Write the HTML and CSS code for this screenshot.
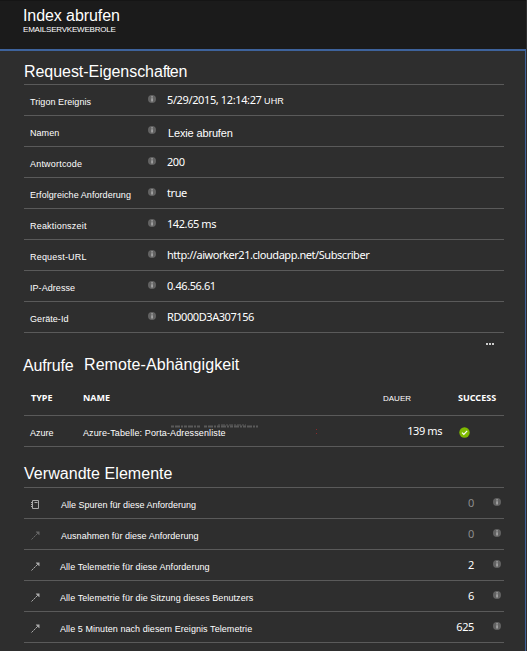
FILE: index.html
```
<!DOCTYPE html>
<html lang="de">
<head>
<meta charset="utf-8">
<title>Index abrufen</title>
<link rel="stylesheet" href="styles.css">
</head>
<body>
<svg width="0" height="0" class="defs">
  <symbol id="info" viewBox="0 0 8 8"><circle cx="4" cy="4" r="4" fill="#626262"/><path d="M3.4 1.3h1.3v1.2H3.4zM3.4 3.2h1.3v3.3H3.4z" fill="#bbb"/></symbol>
  <symbol id="arrow" viewBox="0 0 9 9"><path d="M.5 8.5L7 2" fill="none" stroke="currentColor" stroke-width="1" stroke-dasharray="2.6 .5"/><path d="M4.8 .5H8.5V4.2L7.4 3.6L5.4 1.6z" fill="currentColor"/></symbol>
  <symbol id="book" viewBox="0 0 9 9"><path d="M1.5 .5h6v8h-6zM0 2.5h2M0 4.5h2M0 6.5h2M3.5 2.5h3" fill="none" stroke="currentColor"/></symbol>
</svg>
<div class="blade">
  <header class="top">
    <h1>Index abrufen</h1>
    <p>EMAILSERVKEWEBROLE</p>
  </header>
  <main>
    <h2 class="h-props">Request-Eigenscha<span class="tight">ft</span>en</h2>
    <dl class="props">
      <div class="row"><dt>Trigon Ereignis</dt><svg class="info"><use href="#info"/></svg><dd class="date">5/29/2015, 12:14:27 <small>UHR</small></dd></div>
      <div class="row"><dt>Namen</dt><svg class="info"><use href="#info"/></svg><dd class="plain">Lexie abrufen</dd></div>
      <div class="row"><dt class="wide">Antwortcode</dt><svg class="info"><use href="#info"/></svg><dd>200</dd></div>
      <div class="row"><dt>Erfolgreiche Anforderung</dt><svg class="info"><use href="#info"/></svg><dd>true</dd></div>
      <div class="row"><dt class="wide">Reaktionszeit</dt><svg class="info"><use href="#info"/></svg><dd>142.65 ms</dd></div>
      <div class="row"><dt class="wide">Request-URL</dt><svg class="info"><use href="#info"/></svg><dd class="url">http://aiworker21.cloudapp.net/Subscriber</dd></div>
      <div class="row"><dt>IP-Adresse</dt><svg class="info"><use href="#info"/></svg><dd>0.46.56.61</dd></div>
      <div class="row"><dt>Geräte-Id</dt><svg class="info"><use href="#info"/></svg><dd>RD000D3A307156</dd></div>
    </dl>
    <div class="more"><i></i><i></i><i></i></div>
    <h2 class="h-calls"><span>Aufrufe</span><span class="remote">Remote-Abhängigkeit</span></h2>
    <div class="calls head"><b>TYPE</b><b>NAME</b><span class="dauer">DAUER</span><b>SUCCESS</b></div>
    <div class="calls item"><span>Azure</span><span class="name">Azure-Tabelle: Porta-Adressenliste<svg class="smudge" viewBox="0 0 88 4"><path d="M1 2.5H30M34 2.5H88" stroke="#5a5a5a" stroke-width="2" stroke-dasharray="3 1 5 1 2 1"/><path d="M48 1H76" stroke="#5a5a5a" stroke-dasharray="2 1 4 1"/></svg></span><span class="dots"><i></i><i></i></span><span class="ms">139 ms</span><svg class="ok" viewBox="0 0 11 11"><circle cx="5.5" cy="5.5" r="5.2" fill="#7fba00"/><path d="M3 5.6L4.8 7.4L8.2 3.8" fill="none" stroke="#fff" stroke-width="1.2"/></svg></div>
    <h2 class="h-related">Verwandte Elemente</h2>
    <ul class="related">
      <li><svg class="ico"><use href="#book"/></svg><span class="exact">Alle Spuren für diese Anforderung</span><em class="zero">0</em><svg class="info"><use href="#info"/></svg></li>
      <li><svg class="ico dim"><use href="#arrow"/></svg><span>Ausnahmen für diese Anforderung</span><em class="zero">0</em><svg class="info"><use href="#info"/></svg></li>
      <li><svg class="ico"><use href="#arrow"/></svg><span class="all">Alle Telemetrie für diese Anforderung</span><em>2</em><svg class="info"><use href="#info"/></svg></li>
      <li><svg class="ico"><use href="#arrow"/></svg><span class="all">Alle Telemetrie für die Sitzung dieses Benutzers</span><em>6</em><svg class="info"><use href="#info"/></svg></li>
      <li><svg class="ico"><use href="#arrow"/></svg><span class="all">Alle 5 Minuten nach diesem Ereignis Telemetrie</span><em>625</em><svg class="info"><use href="#info"/></svg></li>
    </ul>
  </main>
</div>
</body>
</html>
```
FILE: styles.css
```
* { box-sizing: border-box; margin: 0; padding: 0; }
body { width: 527px; height: 651px; overflow: hidden; background: #2e2e2e; color: #fff; font: 9px/12px "Liberation Sans", Arial, sans-serif; }
.defs { display: block; height: 0; }
.blade { width: 526px; height: 651px; }
.top { height: 49px; padding: 6px 0 0 23px; background: #1b1b1b; border-top: 1px solid #151515; }
h1 { font-size: 16px; line-height: 18px; font-weight: 400; letter-spacing: -.08px; }
.top p { font-size: 8px; line-height: 9px; letter-spacing: -.2px; }
main { height: 602px; padding: 0 21px 0 24px; border-top: 2px solid #3e639c; border-right: 1px solid #3e639c; }
h2 { font-size: 16px; font-weight: 400; line-height: 20px; white-space: nowrap; letter-spacing: .05px; }
.h-props { height: 33px; padding-top: 11px; letter-spacing: -.05px; }
.tight { letter-spacing: -1px; }
.props { border-top: 1px solid #5a5a5a; }
.row { display: grid; grid-template-columns: 124px 19px 1fr; height: 31px; border-bottom: 1px solid #5a5a5a; }
dt { padding: 11px 0 0 6px; white-space: nowrap; letter-spacing: .06px; }
.wide { letter-spacing: .2px; }
.info { display: block; width: 8px; height: 8px; margin-top: 10px; }
dd { font: 11px/14px "Noto Sans", sans-serif; letter-spacing: -.42px; padding-top: 8px; white-space: nowrap; }
.date { letter-spacing: -.38px; }
.url { letter-spacing: -.45px; }
small { font: 9px/12px "Liberation Sans", sans-serif; letter-spacing: .2px; }
.plain { font: 11px/14px "Liberation Sans", sans-serif; letter-spacing: -.15px; padding: 10px 0 0 1px; }
.more { display: flex; justify-content: flex-end; gap: 1px; height: 22px; padding: 10px 10px 0 0; }
.more i { width: 2px; height: 2px; background: #ccc; }
.h-calls { display: flex; height: 25px; margin-left: -1px; }
.h-calls span { width: 61px; padding-top: 1px; letter-spacing: -.15px; }
.h-calls .remote { padding-top: 0; letter-spacing: .08px; }
.calls { display: grid; border-bottom: 1px solid #5a5a5a; white-space: nowrap; }
.head { grid-template-columns: 52px 300px 75px 1fr; height: 36px; padding: 11px 0 0 7px; }
.calls b { font: bold 9px/14px "Noto Sans", sans-serif; }
.dauer { font-size: 8px; line-height: 15px; }
.item { grid-template-columns: 53px 232px 69px 1fr 11px; height: 31px; padding: 0 34px 0 6px; }
.item > span { padding-top: 11px; }
.item .name { position: relative; letter-spacing: .12px; }
.smudge { position: absolute; left: 87px; top: 8px; width: 88px; height: 4px; }
.item .dots { padding: 13px 0 0 1px; }
.dots i { display: block; width: 1px; height: 1px; margin-bottom: 3px; background: #8a2a2a; }
.item .ms { padding: 8px 17px 0 0; text-align: right; font: 11px/14px "Noto Sans", sans-serif; letter-spacing: -.42px; }
.ok { width: 11px; height: 11px; margin-top: 11px; }
.h-related { height: 40px; padding-top: 17px; }
.related { list-style: none; border-top: 1px solid #5a5a5a; }
.related li { display: grid; grid-template-columns: 37px 1fr 60px 18px 8px; height: 31px; padding-right: 3px; border-bottom: 1px solid #5a5a5a; white-space: nowrap; }
.related span { padding-top: 11px; letter-spacing: .03px; }
.related .exact { letter-spacing: 0; }
.related .all { margin-left: -1px; letter-spacing: .06px; }
.related em { grid-column: 3; font: 11px/14px "Noto Sans", sans-serif; text-align: right; padding: 8px 1px 0 0; letter-spacing: -.4px; }
.related .zero { color: #8d8d8d; }
.related .info { grid-column: 5; }
.ico { width: 9px; height: 9px; margin: 12px 0 0 7px; color: #aaa; }
.dim { color: #666; }
```
